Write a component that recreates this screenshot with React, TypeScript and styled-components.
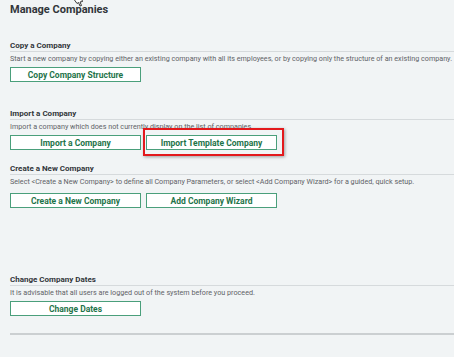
import styled, { createGlobalStyle } from "styled-components"

const GlobalStyle = createGlobalStyle`
  html, body {
    margin: 0;
    padding: 0;
    background: #f1f4f5;
  }
  body {
    font-family: Roboto, "Liberation Sans", Arial, sans-serif;
    color: #32363a;
  }
`

const Page = styled.div`
  position: relative;
  width: 454px;
  height: 357px;
  padding-left: 10px;
  box-sizing: border-box;
  overflow: hidden;
  background: #f1f4f5;
`

const Title = styled.h1`
  margin: 0;
  padding-top: 3px;
  font-size: 11px;
  line-height: 14px;
  font-weight: 700;
  color: #32363a;
`

const Section = styled.section<{ $top: number }>`
  margin-top: ${({ $top }) => $top}px;
`

const Heading = styled.h2`
  margin: 0;
  font-size: 8px;
  line-height: 10px;
  font-weight: 700;
  color: #32363a;
  border-bottom: 1px solid #d6dadc;
`

const Description = styled.p`
  margin: 2px 0 0;
  font-size: 7.2px;
  line-height: 10px;
  color: #5f6367;
  white-space: nowrap;
`

const ButtonRow = styled.div<{ $top: number }>`
  display: flex;
  gap: 5px;
  margin-top: ${({ $top }) => $top}px;
`

const Button = styled.button`
  width: 131px;
  height: 15px;
  padding: 0;
  box-sizing: border-box;
  background: #ffffff;
  border: 1px solid #4a9f7b;
  border-radius: 0;
  font-family: inherit;
  font-size: 8.5px;
  font-weight: 700;
  color: #1e7349;
  cursor: pointer;
`

const Highlighted = styled.div`
  position: relative;
  display: flex;

  &::after {
    content: "";
    position: absolute;
    top: -7px;
    left: -3px;
    right: -7px;
    bottom: -6px;
    border: 2px solid #e3191c;
    box-shadow: 1px 1px 3px rgba(0, 0, 0, 0.35);
    pointer-events: none;
  }
`

const Divider = styled.hr`
  margin: 17px 0 0;
  border: 0;
  height: 2px;
  background: #cbcfd1;
`

const Cursor = styled.svg`
  position: absolute;
  top: 0;
  left: 74px;
`

export default function App() {
  return (
    <Page>
      <GlobalStyle />
      <Cursor width="9" height="7" viewBox="0 0 9 7">
        <path
          d="M0.5 0 L3 3.5 L4.5 2.5 L6 6 L7.5 5.5 L6 2 L8.5 1.5 L8 0"
          fill="#ffffff"
          stroke="#222"
          strokeWidth="0.9"
        />
      </Cursor>
      <Title>Manage Companies</Title>

      <Section $top={24}>
        <Heading>Copy a Company</Heading>
        <Description>
          Start a new company by copying either an existing company with all its
          employees, or by copying only the structure of an existing company.
        </Description>
        <ButtonRow $top={3}>
          <Button>Copy Company Structure</Button>
        </ButtonRow>
      </Section>

      <Section $top={27}>
        <Heading>Import a Company</Heading>
        <Description>
          Import a company which does not currently display on the list of
          companies.
        </Description>
        <ButtonRow $top={3}>
          <Button>Import a Company</Button>
          <Highlighted>
            <Button>Import Template Company</Button>
          </Highlighted>
        </ButtonRow>
      </Section>

      <Section $top={14}>
        <Heading>Create a New Company</Heading>
        <Description>
          Select &lt;Create a New Company&gt; to define all Company Parameters,
          or select &lt;Add Company Wizard&gt; for a guided, quick setup.
        </Description>
        <ButtonRow $top={6}>
          <Button>Create a New Company</Button>
          <Button>Add Company Wizard</Button>
        </ButtonRow>
      </Section>

      <Section $top={67}>
        <Heading>Change Company Dates</Heading>
        <Description>
          It is advisable that all users are logged out of the system before you
          proceed.
        </Description>
        <ButtonRow $top={3}>
          <Button>Change Dates</Button>
        </ButtonRow>
      </Section>

      <Divider />
    </Page>
  )
}
